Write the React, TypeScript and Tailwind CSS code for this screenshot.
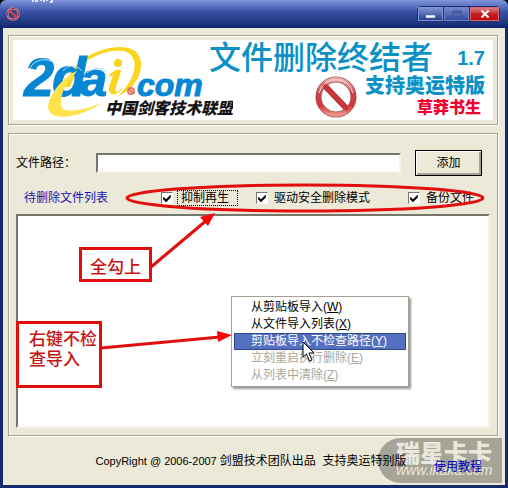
import React, { useState } from "react";

const menuItems = [
  { text: "从剪贴板导入", hotkey: "W", disabled: false },
  { text: "从文件导入列表", hotkey: "X", disabled: false },
  { text: "剪贴板导入不检查路径", hotkey: "Y", disabled: false },
  { text: "立刻重启执行删除", hotkey: "E", disabled: true },
  { text: "从列表中清除", hotkey: "Z", disabled: true },
];

const ForbiddenIcon: React.FC<{ className?: string }> = ({ className }) => (
  <svg viewBox="0 0 42 42" className={className} aria-hidden="true">
    <defs>
      <linearGradient id="ring" x1="0" y1="0" x2="0" y2="1">
        <stop offset="0" stopColor="#eeb0ae" />
        <stop offset="0.4" stopColor="#c9464a" />
        <stop offset="0.75" stopColor="#d3383b" />
        <stop offset="1" stopColor="#ef8f8a" />
      </linearGradient>
    </defs>
    <circle cx="21" cy="21" r="17.5" fill="none" stroke="#a34c4e" strokeWidth="6" />
    <path d="M9.5 9.5L32 33" stroke="#a8383b" strokeWidth="6" />
    <circle cx="21" cy="21" r="17.5" fill="none" stroke="url(#ring)" strokeWidth="4.5" />
    <path d="M8 8L33 34" stroke="#cc3539" strokeWidth="4.5" />
    <path d="M4 17A17.5 17.5 0 0 1 38 17" fill="none" stroke="#f6d6d4" strokeWidth="1" />
  </svg>
);

const TitleBar: React.FC = () => (
  <header className="relative flex h-7 shrink-0 items-center justify-between overflow-hidden rounded-t-md bg-linear-to-b from-[#8096dc] via-[#3c55a8] via-40% to-[#12276b] pr-2 pl-1.5">
    <svg viewBox="0 0 24 3" className="absolute top-0 left-8 h-[3px] w-6" aria-hidden="true">
      <path d="M1 0V2M3 1H6M9 0V1M12 0V2M15 0V1M18 2H20V0" stroke="#fff" strokeWidth="1.5" fill="none" />
    </svg>
    <svg viewBox="0 0 14 14" className="h-3.5 w-3.5" aria-hidden="true">
      <circle cx="7" cy="7" r="5.6" fill="#33447f" stroke="#e3a0ae" strokeWidth="2" />
      <circle cx="7" cy="7" r="5.6" fill="none" stroke="#b02a3c" strokeWidth="1" />
      <path d="M3 3L11 11" stroke="#d0485a" strokeWidth="2" />
    </svg>
    <div className="flex gap-px rounded-sm border border-[#1c2f74] bg-[#1c2f74]">
      <button aria-label="最小化" className="flex h-3.5 w-[25px] justify-center border border-[#7f92d2] bg-linear-to-b from-[#8093d4] to-[#29428f]">
        <svg viewBox="0 0 10 12" className="h-3 w-2.5">
          <path d="M0 8.5H9" stroke="#fff" strokeWidth="2.5" />
        </svg>
      </button>
      <button aria-label="最大化" disabled className="flex h-3.5 w-[25px] justify-center border border-[#6f83c6] bg-linear-to-b from-[#7588cc] to-[#324c9c]">
        <svg viewBox="0 0 10 12" className="h-3 w-2.5">
          <path d="M1 3H9V9H1ZM1 4.5H9" stroke="#3b519d" strokeWidth="1" fill="none" />
        </svg>
      </button>
      <button aria-label="关闭" className="flex h-3.5 w-[29px] justify-center border border-[#d66a74] bg-linear-to-b from-[#d97b83] via-[#c31d20] via-50% to-[#c00808]">
        <svg viewBox="0 0 10 12" className="h-3 w-2.5">
          <path d="M1.5 2.5L8.5 9.5M8.5 2.5L1.5 9.5" stroke="#fff" strokeWidth="2" />
        </svg>
      </button>
    </div>
  </header>
);

const Logo: React.FC = () => (
  <svg viewBox="0 0 220 80" className="h-20 w-[220px] shrink-0" role="img" aria-label="2dai.com 中国剑客技术联盟">
    <path d="M73 17C92 6 112 4 122 11C136 23 124 49 105 56C118 44 127 26 118 15C110 7 92 10 75 20C66 27 60 38 57 47L51 47C55 35 62 25 73 17Z" fill="#fbd51c" />
    <g fontFamily="Liberation Sans, sans-serif" fontWeight="bold" fontStyle="italic" fill="#0787d3">
      <text x="11" y="56" fontSize="54" stroke="#0787d3" strokeWidth="1">2</text>
      <text x="39" y="56" fontSize="56" stroke="#0787d3" strokeWidth="1">d</text>
      <text x="67" y="56" fontSize="49" stroke="#0787d3" strokeWidth="1">a</text>
      <text x="124" y="56" fontSize="32" stroke="#0787d3" strokeWidth="1">com</text>
    </g>
    <path d="M64 31C51 36 36 54 35 67C36 82 65 79 89 63C66 72 50 73 48 66C47 54 53 44 58 39Z" fill="#fee34c" />
    <path d="M97 34C101 30 105 29 108 30C107 38 101 48 103 52C105 52 107 49 109 48C107 55 94 58 96 47L100 35L96 37Z" fill="#fbd51c" />
    <circle cx="105" cy="23" r="4" fill="#fbd51c" />
    <path d="M17 29C20 18 38 17 42 25M50 31C56 23 65 26 69 31M74 33C82 26 91 28 93 32" fill="none" stroke="#b6e0f6" strokeWidth="1" />
    <circle cx="118" cy="51" r="3" fill="#fbd9cd" stroke="#ec7562" strokeWidth="2" />
    <path d="M116 49L120 53" stroke="#dd6556" strokeWidth="1.5" />
    <text x="92" y="74" fontSize="16" fontWeight="900" fontStyle="italic" fontFamily="Noto Sans CJK SC, sans-serif" fill="#161214">
      中国剑客技术联盟
    </text>
  </svg>
);

const Banner: React.FC = () => (
  <section className="border border-[#a5a294] p-1 shadow-[1px_1px_0_#fff,inset_1px_1px_0_#fff]">
    <div className="flex h-20 justify-between overflow-hidden bg-white pr-2">
      <Logo />
      <div className="-ml-6 flex flex-1 flex-col">
        <div className="flex items-center justify-between whitespace-nowrap text-[#0b91c5]">
          <h1 className="text-[32px] leading-9 font-medium">文件删除终结者</h1>
          <span className="font-[Liberation_Sans] text-xl leading-9 font-bold">1.7</span>
        </div>
        <div className="flex justify-end gap-2">
          <ForbiddenIcon className="h-[42px] w-[42px]" />
          <div className="text-right font-black">
            <p className="text-xl leading-5 text-[#0b91c5]">支持奥运特版</p>
            <p className="pr-1 text-base leading-6 text-[#f2002e]">草莽书生</p>
          </div>
        </div>
      </div>
    </div>
  </section>
);

const CheckOption: React.FC<{ label: string; focused?: boolean }> = ({ label, focused }) => {
  const [checked, setChecked] = useState(true);
  return (
    <label className="flex items-center gap-1 whitespace-nowrap">
      <span className="grid">
        <input
          type="checkbox"
          checked={checked}
          onChange={(e) => setChecked(e.target.checked)}
          className="col-start-1 row-start-1 h-3 w-3 appearance-none border border-t-[#77756c] border-r-white border-b-white border-l-[#77756c] bg-white"
        />
        {checked && (
          <svg viewBox="0 0 12 12" className="pointer-events-none col-start-1 row-start-1 h-3 w-3">
            <path d="M2.5 5L5 7.5L9.5 3V5.5L5 10L2.5 7.5Z" fill="#000" stroke="#000" strokeWidth="0.5" />
          </svg>
        )}
      </span>
      <span className={focused ? "border border-dotted border-black pr-2 pl-[3px] leading-[14px]" : "pl-0.5 leading-4"}>{label}</span>
    </label>
  );
};

const ContextMenu: React.FC = () => (
  <div role="menu" className="absolute top-[296px] left-[231px] w-[178px] border border-[#a5a294] bg-white p-0.5 shadow-[2px_2px_2px_#999]">
    {menuItems.map((item) => (
      <button
        key={item.hotkey}
        role="menuitem"
        disabled={item.disabled}
        className={
          item.hotkey === "Y"
            ? "block h-[17px] w-full border border-[#2c4890] bg-[#5470be] pl-4 text-left leading-[15px] whitespace-nowrap text-white"
            : "block h-[17px] w-full border border-transparent pl-4 text-left leading-[15px] whitespace-nowrap text-black disabled:text-[#aaa799]"
        }
      >
        {item.text}(<u>{item.hotkey}</u>)
      </button>
    ))}
    <svg viewBox="0 0 13 21" className="pointer-events-none absolute top-11 left-[70px] h-[21px] w-[13px]" aria-hidden="true">
      <path d="M1 1V16L4.5 13L7.5 20L10 19L7 12H12Z" fill="#fff" stroke="#000" strokeWidth="1" />
    </svg>
  </div>
);

// Red pen marks on top of the window
const Annotations: React.FC = () => (
  <div className="pointer-events-none absolute inset-0">
    <svg viewBox="0 0 508 488" className="absolute top-0 left-0 h-[488px] w-[508px]" aria-hidden="true">
      <g stroke="#e20d0d" strokeWidth="3" fill="none">
        <ellipse cx="305" cy="198" rx="178" ry="13" />
        <path d="M151 267L207 220M101 348L220 337" />
      </g>
      <path d="M215 213L208 226L200 217ZM232 335L217 331L218 342Z" fill="#fb0505" />
    </svg>
    <div className="absolute top-[247px] left-[79px] h-[35px] w-[73px] border-3 border-[#e20d0d] pt-2 pl-2 text-[17px] leading-5 font-medium whitespace-nowrap text-[#c51414]">
      全勾上
    </div>
    <div className="absolute top-[321px] left-4 h-[67px] w-[86px] border-3 border-[#e20d0d] pt-1.5 pl-2.5 text-[17px] leading-5 font-medium whitespace-nowrap text-[#c51414]">
      右键不检
      <br />
      查导入
    </div>
  </div>
);

const App: React.FC = () => {
  const [path, setPath] = useState("");

  return (
    <div className="bg-black">
      <div className="relative flex min-h-screen flex-col rounded-t-md bg-[#142a6c] font-['Liberation_Sans','Noto_Sans_CJK_SC',sans-serif] text-xs text-black">
        <TitleBar />
        <main className="mx-[3px] mb-[3px] flex flex-1 flex-col bg-[#ece9d8] pt-[7px] pr-[7px] pl-[5px]">
          <Banner />

          <section className="mt-2 flex flex-1 flex-col border border-[#a5a294] px-[7px] pb-[7px] shadow-[1px_1px_0_#fff,inset_1px_1px_0_#fff]">
            <div className="flex items-center pt-4 pr-2">
              <label htmlFor="path" className="w-20 whitespace-nowrap">文件路径：</label>
              <input
                id="path"
                value={path}
                onChange={(e) => setPath(e.target.value)}
                className="h-5 min-w-0 flex-1 border-2 border-t-[#77756c] border-r-[#f5f3e9] border-b-[#f5f3e9] border-l-[#77756c] bg-white px-1 outline-none"
              />
              <button className="ml-3.5 h-[26px] w-[67px] border border-black bg-[#ece9d8] shadow-[inset_1px_1px_0_#fff,inset_-2px_-2px_0_#a5a294]">
                添加
              </button>
            </div>

            <div className="mt-3 flex h-5 items-center pr-4 pl-2">
              <span className="w-[137px] whitespace-nowrap text-[#1414b4]">待删除文件列表</span>
              <div className="w-[95px]">
                <CheckOption label="抑制再生" focused />
              </div>
              <div className="flex flex-1 justify-between">
                <CheckOption label="驱动安全删除模式" />
                <CheckOption label="备份文件" />
              </div>
            </div>

            <div className="mt-1.5 flex-1 border-2 border-t-[#77756c] border-r-[#f5f3e9] border-b-[#f5f3e9] border-l-[#77756c] bg-white" />
          </section>

          <footer className="relative flex h-[49px] items-center justify-center pr-1">
            <div className="pointer-events-none absolute -right-1 bottom-0.5 h-[45px] w-[124px] rounded-l-full bg-[#a6a497] pt-2 pl-[18px] whitespace-nowrap text-[#e9e7dc]">
              <p className="text-2xl leading-4 font-black">瑞星卡卡</p>
              <p className="text-sm leading-4 italic">www.ikaka.com</p>
            </div>
            <p className="relative whitespace-pre"><span className="text-[11px]">CopyRight @ 2006-2007 </span>剑盟技术团队出品  支持奥运特别版</p>
            <a href="#help" className="absolute right-4 bottom-2.5 text-[#0000c4]">使用教程</a>
          </footer>
        </main>

        <ContextMenu />
        <Annotations />
      </div>
    </div>
  );
};

export default App;
